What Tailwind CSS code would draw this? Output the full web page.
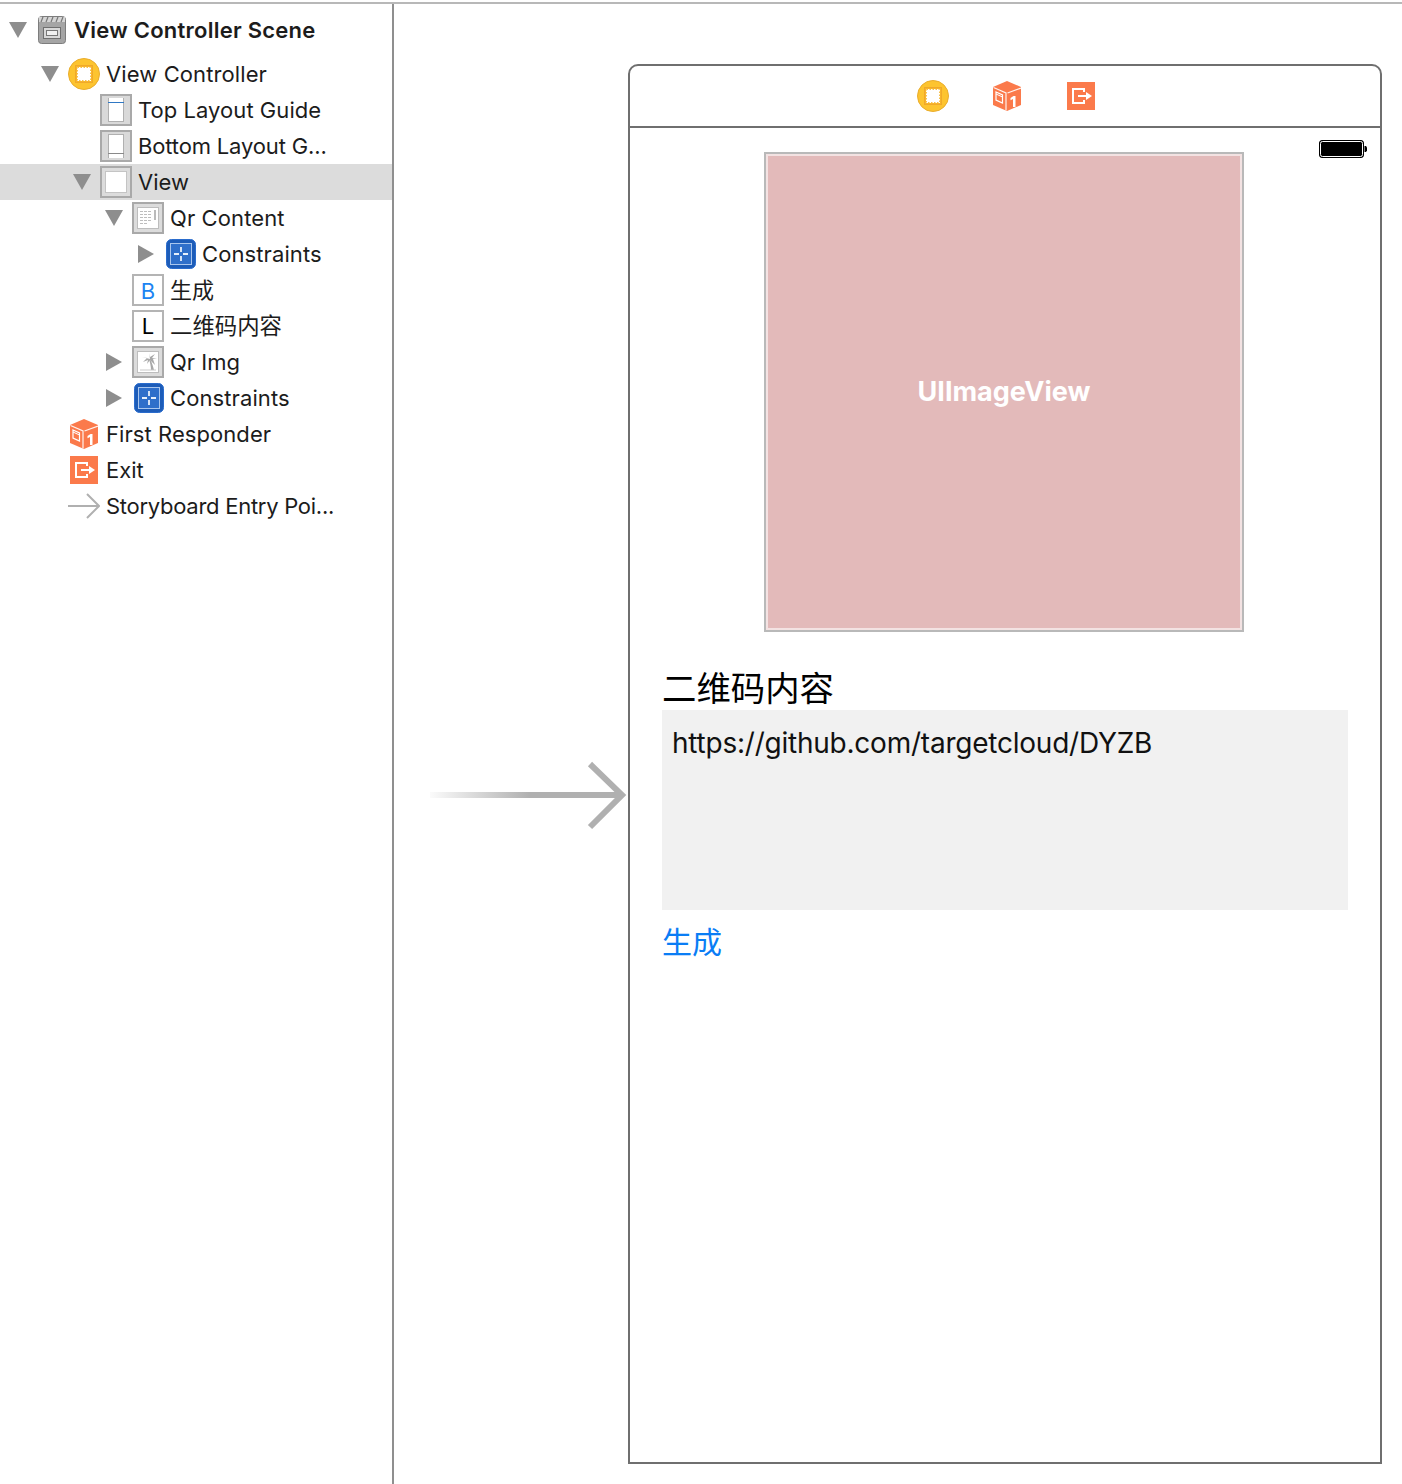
<!DOCTYPE html>
<html lang="zh">
<head>
  <meta charset="UTF-8">
  <title>Main.storyboard</title>
  <script src="https://cdn.jsdelivr.net/npm/@tailwindcss/browser@4"></script>
</head>
<body class="bg-white">
  <!-- shared icons -->
  <svg class="absolute h-0 w-0" width="0" height="0">
    <defs>
      <symbol id="tri-down" viewBox="0 0 18 16"><path d="M0 0H18L9 16Z" fill="#8e8e8e"/></symbol>
      <symbol id="tri-right" viewBox="0 0 16 18"><path d="M0 0V18L16 9Z" fill="#8e8e8e"/></symbol>
      <symbol id="vc" viewBox="0 0 32 32">
        <circle cx="16" cy="16" r="15.5" fill="#fdc42f" stroke="#e9ad2e"/>
        <rect x="7.500" y="7.500" width="17" height="17" fill="#f8b52c" stroke="#f0a92a"/>
        <rect x="9.500" y="9.500" width="13" height="13" fill="#fff" stroke="#fff"/>
        <rect x="9.500" y="9.500" width="13" height="13" fill="none" stroke="#f8c04a" stroke-width="1" stroke-dasharray="1.5 1.5"/>
      </symbol>
      <symbol id="cube" viewBox="0 0 28 30">
        <path d="M14 0L28 6V24L14 30L0 24V6Z" fill="#fb7a4b"/>
        <path d="M0.500 6.500L13 12V29.500M28 7L14.500 12" fill="none" stroke="#fff" stroke-width="1.2" opacity="0.9"/>
        <path d="M3 11L9.500 14V22L3 19Z" fill="none" stroke="#fff" stroke-width="1.2"/>
        <path d="M3 13L9.500 16" stroke="#fff" stroke-width="1"/>
        <path d="M17.500 17L20.500 15H22.500V26H20V18L17.500 19.300Z" fill="#fff"/>
      </symbol>
      <symbol id="exit" viewBox="0 0 28 28">
        <rect width="28" height="28" fill="#fb7a4b"/>
        <path d="M17 10V7H6V21H17V18" fill="none" stroke="#fff" stroke-width="2"/>
        <path d="M11 13H19V10L25 14L19 18V15H11Z" fill="#fff"/>
      </symbol>
      <symbol id="constraints" viewBox="0 0 30 30">
        <rect x="0.500" y="0.500" width="29" height="29" rx="5" fill="#1d5cb8" stroke="#2a6ccd"/>
        <rect x="4.500" y="4.500" width="21" height="21" fill="#2f6fca" stroke="#a9c6ee"/>
        <path d="M15 8V13M15 17V22M8 15H13M17 15H22" stroke="#e8f0fb" stroke-width="1.800"/>
      </symbol>
    </defs>
  </svg>

  <div class="relative h-[1484px] w-[1402px] overflow-hidden font-['Inter',sans-serif]">
    <div class="mt-[2px] h-[2px] bg-[#b8b8b8]"></div>
    <div class="flex h-[1480px]">

      <!-- document outline -->
      <aside class="w-[394px] shrink-0 border-r-2 border-[#8f8f8f] pt-[8px] text-[22px] leading-[36px] text-[#1c1c1c]">

        <div class="mb-[8px] flex h-[36px] items-center">
          <span class="flex w-[36px] justify-center"><svg class="h-[16px] w-[18px]"><use href="#tri-down"/></svg></span>
          <span class="flex w-[32px] justify-center">
            <svg class="h-[28px] w-[28px]" viewBox="0 0 28 28">
              <rect x="0.500" y="0.500" width="27" height="27" rx="3" fill="#a5a5a5" stroke="#7d7d7d"/>
              <rect x="1" y="1" width="26" height="5" fill="#d6d6d6"/>
              <path d="M3 6L5 1M8 6L10 1M13 6L15 1M18 6L20 1M23 6L25 1" stroke="#777" stroke-width="1.200"/>
              <rect x="5.500" y="11.500" width="17" height="11" fill="#d8d8d8" stroke="#6f6f6f"/>
              <rect x="8.500" y="14.500" width="11" height="5" fill="#f0f0f0" stroke="#777"/>
            </svg>
          </span>
          <span class="ml-[6px] font-semibold tracking-[0.25px]">View Controller Scene</span>
        </div>

        <div class="flex h-[36px] items-center pl-[32px]">
          <span class="flex w-[36px] justify-center"><svg class="h-[16px] w-[18px]"><use href="#tri-down"/></svg></span>
          <svg class="h-[32px] w-[32px]"><use href="#vc"/></svg>
          <span class="ml-[6px] tracking-[0.1px]">View Controller</span>
        </div>

        <div class="flex h-[36px] items-center pl-[100px]">
          <span class="relative h-[32px] w-[32px] border-2 border-[#a9a9a9] bg-[#d9d9d9]">
            <span class="absolute left-[6px] top-[2px] h-[24px] w-[16px] border-x border-b border-[#b0b0b0] bg-white"></span>
            <span class="absolute left-[6px] top-[6px] h-[1px] w-[16px] bg-[#2f78c4]"></span>
          </span>
          <span class="ml-[6px] tracking-[0.05px]">Top Layout Guide</span>
        </div>

        <div class="flex h-[36px] items-center pl-[100px]">
          <span class="relative h-[32px] w-[32px] border-2 border-[#a9a9a9] bg-[#d9d9d9]">
            <span class="absolute left-[6px] top-[2px] h-[24px] w-[16px] border-x border-t border-[#b0b0b0] bg-white"></span>
            <span class="absolute bottom-[6px] left-[6px] h-[1px] w-[16px] bg-[#8a8a8a]"></span>
          </span>
          <span class="ml-[6px] tracking-[-0.15px]">Bottom Layout G...</span>
        </div>

        <div class="flex h-[36px] items-center bg-[#dcdcdc] pl-[64px]">
          <span class="flex w-[36px] justify-center"><svg class="h-[16px] w-[18px]"><use href="#tri-down"/></svg></span>
          <span class="flex h-[32px] w-[32px] items-center justify-center border-2 border-[#a9a9a9]">
            <span class="h-[22px] w-[22px] border border-[#c4c4c4] bg-white"></span>
          </span>
          <span class="ml-[6px]">View</span>
        </div>

        <div class="flex h-[36px] items-center pl-[96px]">
          <span class="flex w-[36px] justify-center"><svg class="h-[16px] w-[18px]"><use href="#tri-down"/></svg></span>
          <span class="flex h-[32px] w-[32px] items-center justify-center border-2 border-[#a9a9a9] bg-[#dcdcdc]">
            <svg class="h-[22px] w-[22px]" viewBox="0 0 22 22">
              <rect x="0.500" y="0.500" width="21" height="21" fill="#fff" stroke="#bdbdbd"/>
              <path d="M3 4.500H15M3 7.500H15M3 10.500H15M3 13.500H15M3 16.500H11" stroke="#bdbdbd" stroke-dasharray="3 1"/>
              <path d="M18 3V13" stroke="#a5a5a5" stroke-width="1.500"/>
            </svg>
          </span>
          <span class="ml-[6px] tracking-[0.1px]">Qr Content</span>
        </div>

        <div class="flex h-[36px] items-center pl-[128px]">
          <span class="flex w-[36px] justify-center"><svg class="h-[18px] w-[16px]"><use href="#tri-right"/></svg></span>
          <span class="flex w-[32px] justify-center pl-[1px]"><svg class="h-[30px] w-[30px]"><use href="#constraints"/></svg></span>
          <span class="ml-[6px] tracking-[0.1px]">Constraints</span>
        </div>

        <div class="flex h-[36px] items-center pl-[132px]">
          <span class="flex h-[32px] w-[32px] items-center justify-center border-2 border-[#b4b4b4] pt-[2px] text-[22px] text-[#1c84f2]">B</span>
          <span class="ml-[6px] mt-[-4px] font-['Noto_Sans_CJK_SC',sans-serif] text-[22px]">生成</span>
        </div>

        <div class="flex h-[36px] items-center pl-[132px]">
          <span class="flex h-[32px] w-[32px] items-center justify-center border-2 border-[#b4b4b4] text-[22px] text-black">L</span>
          <span class="ml-[6px] mt-[-4px] font-['Noto_Sans_CJK_SC',sans-serif] text-[22.4px]">二维码内容</span>
        </div>

        <div class="flex h-[36px] items-center pl-[96px]">
          <span class="flex w-[36px] justify-center"><svg class="h-[18px] w-[16px]"><use href="#tri-right"/></svg></span>
          <span class="flex h-[32px] w-[32px] items-center justify-center border-2 border-[#a9a9a9] bg-[#dcdcdc]">
            <svg class="h-[22px] w-[22px]" viewBox="0 0 22 22">
              <rect x="0.500" y="0.500" width="21" height="21" fill="#fff" stroke="#bdbdbd"/>
              <path d="M12 8C13 12 14 15 14 19H17C16 15 15 12 13 8Z" fill="#a8a8a8"/>
              <path d="M13 8L5 6L10 7L6 11L11 9L10 13L13 9L18 14L16 8L20 8L15 7L18 3L13 6L12 2Z" fill="#a8a8a8"/>
              <path d="M3 19H19" stroke="#c8c8c8"/>
            </svg>
          </span>
          <span class="ml-[6px]">Qr Img</span>
        </div>

        <div class="flex h-[36px] items-center pl-[96px]">
          <span class="flex w-[36px] justify-center"><svg class="h-[18px] w-[16px]"><use href="#tri-right"/></svg></span>
          <span class="flex w-[32px] justify-center pl-[1px]"><svg class="h-[30px] w-[30px]"><use href="#constraints"/></svg></span>
          <span class="ml-[6px] tracking-[0.1px]">Constraints</span>
        </div>

        <div class="flex h-[36px] items-center pl-[68px]">
          <span class="flex w-[32px] justify-center"><svg class="h-[30px] w-[28px]"><use href="#cube"/></svg></span>
          <span class="ml-[6px] tracking-[0.07px]">First Responder</span>
        </div>

        <div class="flex h-[36px] items-center pl-[68px]">
          <span class="flex w-[32px] justify-center"><svg class="h-[28px] w-[28px]"><use href="#exit"/></svg></span>
          <span class="ml-[6px]">Exit</span>
        </div>

        <div class="flex h-[36px] items-center pl-[68px]">
          <svg class="h-[26px] w-[32px]" viewBox="0 0 32 26" fill="none" stroke="#b0b0b0" stroke-width="2">
            <path d="M0 13H31M19 1L31 13L19 25"/>
          </svg>
          <span class="ml-[6px] tracking-[-0.27px]">Storyboard Entry Poi...</span>
        </div>
      </aside>

      <!-- canvas -->
      <main class="flex-1 pl-[234px] pt-[60px]">
        <section class="h-[1400px] w-[754px] overflow-hidden rounded-t-[10px] border-2 border-[#6f6f6f]">
          <div class="flex h-[62px] items-center justify-center gap-[42px] border-b-2 border-[#6f6f6f] pl-[4px]">
            <svg class="h-[32px] w-[32px]"><use href="#vc"/></svg>
            <span class="flex w-[32px] justify-center"><svg class="h-[30px] w-[28px]"><use href="#cube"/></svg></span>
            <span class="flex w-[32px] justify-center"><svg class="h-[28px] w-[28px]"><use href="#exit"/></svg></span>
          </div>

          <div class="relative px-[32px] pt-[24px]">
            <svg class="absolute right-[13px] top-[11px] h-[20px] w-[48px]" viewBox="0 0 48 20">
              <rect x="0.500" y="1.500" width="44" height="17" rx="2.500" fill="#000" stroke="#000"/>
              <rect x="1.500" y="2.500" width="42" height="15" rx="2" fill="#000" stroke="#fff" stroke-width="1"/>
              <path d="M45.500 7H47L48 8.500V11.500L47 13H45.500Z" fill="#000"/>
            </svg>

            <div class="ml-[102px] flex h-[480px] w-[480px] items-center justify-center border-2 border-[#b9b9b9] bg-[#e3baba] shadow-[inset_0_0_0_2px_#f3e2e2]">
              <span class="text-[27px] font-bold text-white">UIImageView</span>
            </div>

            <div class="mt-[33px] flex h-[45px] items-center pb-[1px] font-['Noto_Sans_CJK_SC',sans-serif] text-[34.4px] text-black">二维码内容</div>

            <div class="h-[200px] bg-[#f1f1f1] px-[10px] pt-[14px] text-[28px] leading-[38px] tracking-[-0.23px] text-[#111]">https://github.com/targetcloud/DYZB</div>

            <div class="mt-[10px] font-['Noto_Sans_CJK_SC',sans-serif] text-[30px] leading-[40px] text-[#0a7df5]">生成</div>
          </div>
        </section>
      </main>
    </div>

    <!-- segue arrow into the scene -->
    <svg class="absolute left-0 top-0 h-[1484px] w-[1402px]" viewBox="0 0 1402 1484" fill="none">
      <defs>
        <linearGradient id="arrowFade" gradientUnits="userSpaceOnUse" x1="430" y1="0" x2="530" y2="0">
          <stop offset="0" stop-color="#b0b0b0" stop-opacity="0.05"/>
          <stop offset="1" stop-color="#b0b0b0"/>
        </linearGradient>
      </defs>
      <rect x="430" y="792" width="190" height="6" fill="url(#arrowFade)"/>
      <path d="M590 764L622 795L590 827" stroke="#b0b0b0" stroke-width="6"/>
    </svg>
  </div>
</body>
</html>
